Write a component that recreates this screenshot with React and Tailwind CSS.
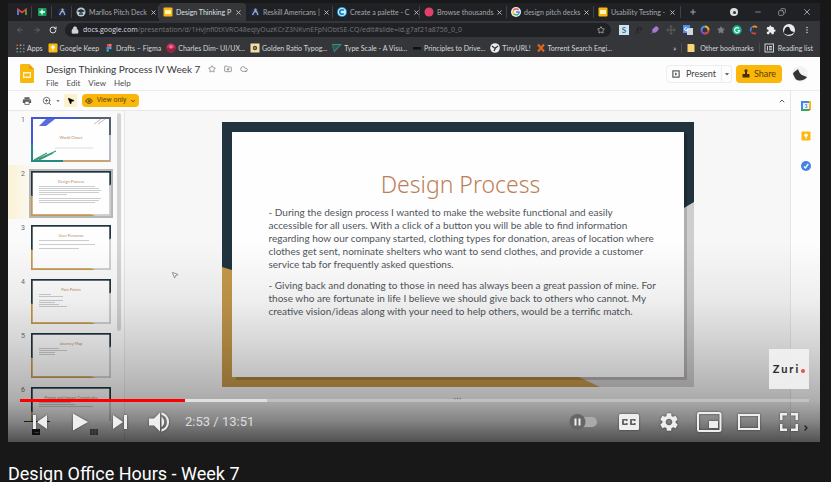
import React from "react";
import {
  ArrowLeft, ArrowRight, RotateCw, Lock, Star, Plus, Minus, X, Copy, ZoomIn,
  ChevronUp, ChevronDown, ChevronRight, Cloud, FolderPlus, Eye, MousePointer2, Feather, Move,
} from "lucide-react";
import { MdExtension, MdMoreVert, MdArrowDropDown, MdPrint, MdSettings } from "react-icons/md";

function SlidesMark({ className }) {
  return (
    <svg viewBox="0 0 14 19" className={className} aria-hidden="true">
      <path d="M1.5 0H9l5 5v12.5a1.5 1.5 0 0 1-1.5 1.5h-11A1.5 1.5 0 0 1 0 17.500V1.500A1.500 1.500 0 0 1 1.500 0Z" fill="#f9b80c" />
      <path d="M9 0l5 5H9Z" fill="#e79f06" />
      <path d="M3 8h8v6H3Z M4.200 9.500v3h5.600v-3Z" fill="#fff4cf" fillRule="evenodd" />
    </svg>
  );
}

function Fav({ kind }) {
  const art = {
    gmail: <><path d="M1 8V2.500l4 3 4-3V8" stroke="#e84235" strokeWidth="1.700" fill="none" /><path d="M1 3v5" stroke="#4285f4" strokeWidth="1.600" /><path d="M9 3v5" stroke="#34a853" strokeWidth="1.600" /></>,
    sheet: <><rect x="1" y="1" width="8.500" height="8" rx="1" fill="#129d5a" /><path d="M5 2.500v5M2.500 5h5.500" stroke="#fff" strokeWidth="1.400" /></>,
    blue: <><circle cx="5" cy="5" r="4.500" fill="#142a66" /><circle cx="5.500" cy="2.800" r="1.200" fill="#c6a95c" /><path d="M2.500 8l2-3.500h2L8 8" stroke="#b9ab83" strokeWidth="1.300" fill="none" /></>,
    cap: <><circle cx="5" cy="5" r="4.500" fill="#b9cdd2" /><path d="M1 4l4-2 4 2-4 2Z" fill="#27323b" /><path d="M3 6h4v2H3Z" fill="#4a5a63" /></>,
    slides: <><rect x="0.500" y="0.500" width="9" height="9" rx="1" fill="#f9b80c" /><rect x="2" y="3" width="6" height="4" fill="#fff0c0" /></>,
    canva: <><circle cx="5" cy="5" r="5" fill="#1b9ddb" /><circle cx="5" cy="5" r="4" fill="#c9effa" /><path d="M6.800 3.500a2.300 2.300 0 1 0 0 3" stroke="#127bb8" strokeWidth="1.600" fill="none" /></>,
    pink: <circle cx="5" cy="5" r="4.500" fill="#e23f6d" />,
    google: <><circle cx="5" cy="5" r="5" fill="#eee" /><path d="M7.500 3a3.200 3.200 0 0 0-5.200.5" stroke="#ea4335" strokeWidth="1.300" fill="none" /><path d="M2.200 3.700a3 3 0 0 0 .3 3" stroke="#fbbc05" strokeWidth="1.300" fill="none" /><path d="M2.500 6.600a3.200 3.200 0 0 0 4.700.6" stroke="#34a853" strokeWidth="1.300" fill="none" /><path d="M5 5h3.200a3 3 0 0 1-1 2.200" stroke="#4285f4" strokeWidth="1.300" fill="none" /></>,
    apps: <>{[1.5, 4.8, 8].map((y, r) => [1.5, 4.8, 8].map((x, c) => <rect key={x + "-" + y} x={x} y={y} width="1.500" height="1.500" fill={["#e55043", "#f0a92b", "#3f8be0", "#46a85b"][(r + c) % 4]} />))}</>,
    keep: <><rect x="0.500" y="0.500" width="9" height="9" rx="1" fill="#fbb80f" /><circle cx="5" cy="4.300" r="1.800" fill="#fff" /><path d="M4.200 7h1.600" stroke="#fff" /></>,
    figma: <><path d="M3 1h2v2.700H3Z" fill="#f24e1e" /><path d="M5 1h2.500v2.700H5Z" fill="#ff7262" /><path d="M2.500 3.700H5v2.700H2.500Z" fill="#a259ff" /><circle cx="6.300" cy="5" r="1.300" fill="#1abcfe" /><path d="M2.500 6.400H5v1.300a1.300 1.300 0 0 1-2.500 0Z" fill="#0acf83" /></>,
    insta: <><circle cx="5" cy="5" r="4.500" fill="#d72f6b" /><path d="M.5 5a4.500 4.500 0 0 0 9 0L5 4Z" fill="#9b2340" /><circle cx="5" cy="4" r="1.800" fill="#ef7c83" /></>,
    gold: <><rect x="0.500" y="0.500" width="9" height="9" fill="#f2dfaa" /><circle cx="5" cy="5" r="2.200" fill="#54462a" /><circle cx="5" cy="5" r="0.800" fill="#e9d69d" /></>,
    scale: <><path d="M0 1h10L2 9.500Z" fill="#3f8d80" /><path d="M1 2l7 0L2 8Z" fill="#255b54" /></>,
    dash: <rect x="1" y="4" width="8" height="2.500" fill="#101114" />,
    tiny: <><circle cx="5" cy="5" r="4.800" fill="#ececec" /><path d="M2 3l3 2.500L8 3M4 8l2-4" stroke="#353535" strokeWidth="1.300" fill="none" /></>,
    torrent: <path d="M2 1.500l6 7M8 1.500l-6 7" stroke="#dc6524" strokeWidth="2.200" />,
    folder: <path d="M1.500 1h6l1 1v7h-7Z" fill="#f7d673" />,
    reading: <><rect x="1" y="1" width="8.500" height="8" fill="none" stroke="#cfcfd1" /><path d="M3.500 3v4.500M5 3.500h3M5 5h3M5 6.700h3" stroke="#cfcfd1" /></>,
  };
  return <svg viewBox="0 0 10 10" className="size-2.5 shrink-0" aria-hidden="true">{art[kind]}</svg>;
}

const tabs = [
  ["cap", "Marllos Pitch Deck"],
  ["slides", "Design Thinking P", true],
  ["blue", "Reskill Americans |"],
  ["canva", "Create a palette - C"],
  ["pink", "Browse thousands"],
  ["google", "design pitch decks"],
  ["slides", "Usability Testing -"],
];

const bookmarks = [
  ["apps", "Apps"],
  ["keep", "Google Keep"],
  ["figma", "Drafts – Figma"],
  ["insta", "Charles Dim- UI/UX..."],
  ["gold", "Golden Ratio Typog..."],
  ["scale", "Type Scale - A Visu..."],
  ["dash", "Principles to Drive..."],
  ["tiny", "TinyURL!"],
  ["torrent", "Torrent Search Engi..."],
];

function TabStrip() {
  return (
    <div className="flex h-[18px] shrink-0 items-center bg-[#202124] pl-1 text-[7px] text-[#a6a7aa]">
      {["gmail", "sheet", "blue"].map((k) => (
        <div key={k} className="flex h-3 w-5 shrink-0 items-center justify-center border-r border-[#414246]"><Fav kind={k} /></div>
      ))}
      {tabs.map(([icon, label, active]) => (
        <div key={label} className={active ? "flex h-full w-[87px] shrink-0 items-center gap-[3px] rounded-t bg-[#35363a] px-1 text-[#dfe0e2]" : "flex h-3 w-[87px] shrink-0 items-center gap-[3px] border-r border-[#414246] px-1"}>
          <Fav kind={icon} />
          <span className="whitespace-nowrap">{label}</span>
          <button aria-label="Close tab" className="ml-auto text-[#c9cacc]"><X className="size-[7px]" strokeWidth={3} /></button>
        </div>
      ))}
      <button aria-label="New tab" className="ml-2"><Plus className="size-2" strokeWidth={3} /></button>
      <div className="ml-auto flex items-center gap-4 pr-2 text-[#b5b6b8]">
        <span className="flex size-2 items-center justify-center rounded-full bg-[#dedede]"><span className="size-[3px] rounded-full bg-[#333]" /></span>
        <button aria-label="Minimize"><Minus className="size-2" /></button>
        <button aria-label="Restore"><Copy className="size-2 -scale-x-100" /></button>
        <button aria-label="Close window"><X className="size-2.5" /></button>
      </div>
    </div>
  );
}

function Extensions() {
  return (
    <div className="flex flex-1 items-center justify-between pr-2 pl-2 text-[#c9cacc]">
      <span className="flex size-2.5 items-center justify-center bg-[#cfe3ef] font-bold text-[#2e6f97]">S</span>
      <span className="w-2 text-[#141517] italic">f?</span>
      <Feather className="size-2 fill-[#a77ad0] text-[#a77ad0]" />
      <Move className="size-2.5 text-[#66676b]" />
      <svg viewBox="0 0 10 10" className="size-2.5"><rect width="7" height="8" fill="#4b8df0" /><rect x="4" y="3" width="6" height="7" fill="#cfd6df" /><path d="M3.500 2.500A1.700 1.700 0 1 0 5 4.500H3.500" stroke="#fff" fill="none" /></svg>
      <svg viewBox="0 0 10 10" className="size-2.5"><g fill="none" strokeWidth="2"><path d="M5 1.500A3.500 3.500 0 0 1 8.500 5" stroke="#e9b53b" /><path d="M8.500 5A3.500 3.500 0 0 1 5 8.500" stroke="#e3493d" /><path d="M5 8.500A3.500 3.500 0 0 1 1.500 5" stroke="#8f4fcb" /><path d="M1.500 5A3.500 3.500 0 0 1 5 1.500" stroke="#3d94ec" /></g></svg>
      <Star className="size-2 fill-[#7c7d80] text-[#7c7d80]" />
      <svg viewBox="0 0 10 10" className="size-2.5"><circle cx="5" cy="5" r="4.700" fill="#17b585" /><path d="M7 3.500a2.500 2.500 0 1 0 .5 2H5.500" stroke="#e6fff6" strokeWidth="1.200" fill="none" /></svg>
      <svg viewBox="0 0 10 10" className="size-2.5"><g fill="none" strokeWidth="1.700"><path d="M8 2.500A3.600 3.600 0 0 0 3.500 2" stroke="#e79a2d" /><path d="M3 2.200A3.600 3.600 0 0 0 2 6.500" stroke="#4a80dc" /><path d="M2.500 7.200A3.600 3.600 0 0 0 7 8" stroke="#cf4a3e" /></g></svg>
      <MdExtension className="size-2.5 text-[#ededee]" />
      <svg viewBox="0 0 12 12" className="size-3"><circle cx="6" cy="6" r="6" fill="#eceded" /><path d="M1 9c0-4 2-7 5-6l2 4 3 1c-1 3-8 4-10 1Z" fill="#25262a" /></svg>
      <MdMoreVert className="size-2.5" />
    </div>
  );
}

function Browser() {
  return (
    <div className="shrink-0 font-[Lato,sans-serif] text-[8px] leading-[10px]">
      <TabStrip />
      <div className="flex h-[18px] items-center bg-[#35363a]">
        <div className="flex w-[57px] items-center justify-between pr-2 pl-2 text-[#737478]">
          <ArrowLeft className="size-2" /><ArrowRight className="size-2" /><RotateCw className="size-2 text-[#dcdddf]" strokeWidth={3} />
        </div>
        <div className="flex h-[14px] w-[546px] items-center gap-1 rounded-full bg-[#202124] px-1.5 text-[#77787c]">
          <Lock className="size-2 shrink-0 fill-[#d5d5d7] text-[#d5d5d7]" />
          <label className="flex flex-1 items-center font-['Open_Sans',sans-serif] text-[7px]">
            <span className="text-[#dedfe1]">docs.google.com</span>
            <input readOnly aria-label="Address" className="min-w-0 flex-1 bg-transparent outline-none" value="/presentation/d/1HvJnfl0tXVRO48eqlyOuzKCrZ3NKvnEFpNObtSE-CQ/edit#slide=id.g7af21a8756_0_0" />
          </label>
          <Star className="size-2 text-[#d5d5d7]" />
        </div>
        <Extensions />
      </div>
      <div className="flex h-[18px] items-center gap-[5px] bg-[#35363a] pl-[7px] text-[7px] text-[#d6d7d9]">
        {bookmarks.map(([icon, label]) => (
          <a key={label} href="#" className="flex shrink-0 items-center gap-0.5 whitespace-nowrap"><Fav kind={icon} />{label}</a>
        ))}
        <span className="ml-auto">»</span>
        <a href="#" className="flex shrink-0 items-center gap-1 border-l border-[#4b4c50] pl-1 whitespace-nowrap"><Fav kind="folder" />Other bookmarks</a>
        <a href="#" className="flex shrink-0 items-center gap-1 border-l border-[#4b4c50] pr-[7px] pl-1 whitespace-nowrap"><Fav kind="reading" />Reading list</a>
      </div>
    </div>
  );
}

function DocsHeader() {
  return (
    <header className="flex h-[34px] shrink-0 items-center border-b border-[#ececee] bg-[#fdfdfe] pl-3 font-[Lato,sans-serif]">
      <SlidesMark className="h-[19px] w-[14px]" />
      <div className="ml-3 flex flex-col pt-1">
        <div className="flex items-center gap-2 text-[#6c6d70]">
          <h1 className="text-[10px] leading-[14px] text-[#37383b]">Design Thinking Process IV Week 7</h1>
          <Star className="size-2" /><FolderPlus className="size-2" /><Cloud className="size-2" />
        </div>
        <nav className="flex gap-2 text-[8px] leading-[14px] text-[#4c4d50]">
          <button>File</button><button>Edit</button><button>View</button><button>Help</button>
        </nav>
      </div>
      <div className="ml-auto flex items-center pr-3 text-[9px] text-[#3e3f42]">
        <button className="flex h-[18px] w-14 items-center justify-center gap-1.5 rounded-l-sm border border-[#ededef]">
          <svg viewBox="0 0 9 9" className="size-2"><rect x="1" y="1" width="7" height="7" fill="none" stroke="#444" strokeWidth="1.200" /><path d="M3.500 2.800v3.400L6 4.500Z" fill="#444" /></svg>
          Present
        </button>
        <button aria-label="Present options" className="h-[18px] w-2.5 rounded-r-sm border-y border-r border-[#ededef]"><MdArrowDropDown className="size-2.5" /></button>
        <button className="ml-1 flex h-[18px] w-[46px] items-center justify-center gap-1 rounded-sm bg-[#fbb60a] text-[#5a4208]">
          <svg viewBox="0 0 8 9" className="h-[9px] w-2"><circle cx="4" cy="1.800" r="1.600" fill="#463205" /><path d="M3 3h2v2h2.500v3.500h-7V5H3Z" fill="#463205" /></svg>
          Share
        </button>
        <svg viewBox="0 0 16 16" className="ml-2.5 size-4"><circle cx="8" cy="8" r="8" fill="#f3f3f4" /><path d="M1 8c1-3 3-3 5-5 1 3 2 5 4 6l5 2c-2 4-10 5-12 1Z" fill="#343436" /></svg>
      </div>
    </header>
  );
}

function Toolbar() {
  return (
    <div className="flex h-5 shrink-0 items-center border-b border-[#e8e8ea] bg-[#fdfdfe] pr-1 pl-3.5 text-[#5b5c5f]">
      <button aria-label="Print"><MdPrint className="size-2.5" /></button>
      <button aria-label="Zoom" className="ml-2.5 flex items-center gap-0.5"><ZoomIn className="size-2.5" /><MdArrowDropDown className="size-2" /></button>
      <button aria-label="Select" className="ml-0.5 flex size-[13px] items-center justify-center bg-[#fdf0cd]"><MousePointer2 className="size-2 fill-black text-black" /></button>
      <button className="ml-[5px] flex h-[13px] w-[57px] items-center justify-center gap-1 rounded-sm bg-[#fbb60a] font-[Roboto,sans-serif] text-[7px] text-[#5e4508]">
        <Eye className="size-2" strokeWidth={3} />View only<ChevronDown className="size-1.5" strokeWidth={4} />
      </button>
      <button aria-label="Hide menus" className="ml-auto"><ChevronUp className="size-2" strokeWidth={3} /></button>
    </div>
  );
}

function Frame() {
  return (
    <svg viewBox="0 0 472 265" preserveAspectRatio="none" className="absolute inset-0 size-full" aria-hidden="true">
      <rect width="472" height="265" fill="#d0cdce" />
      <path d="M0 140L30 152L30 245H336L378 265H0Z" fill="#c4984a" />
      <path d="M0 0H472V80L440 99V30H30V154L0 145Z" fill="#20333e" />
      <path d="M462 12h3v246H14v-3h448Z" fill="#000" opacity="0.150" />
      <rect x="10" y="10" width="452" height="245" fill="#fefefe" />
    </svg>
  );
}

function CoverArt() {
  return (
    <svg viewBox="0 0 80 45" className="absolute inset-0 size-full" aria-hidden="true">
      <rect width="80" height="45" fill="#b8bbc2" />
      <path d="M0 0H48V2H2V30H0Z" fill="#4259d6" /><path d="M46 0h34v18h-2V2H46Z" fill="#53626e" />
      <path d="M0 28h2v15h30v2H0Z" fill="#268a82" /><path d="M32 43h47v2H32Z" fill="#cba373" />
      <rect x="2" y="2" width="76" height="41" fill="#fefefe" />
      <path d="M15 2h9L15 9H8Z" fill="#5a6be0" /><path d="M63 7l7-5M67 7l7-5" stroke="#c8b3bb" />
      <path d="M3 43l13-7M8 43l14-7M5 43l20-9" stroke="#35977a" strokeWidth="1.300" />
      <path d="M24 31h38" stroke="#d5d5d8" strokeWidth="0.800" />
    </svg>
  );
}

const thumbs = [
  { title: "World Closet", cover: true, bars: [] },
  { title: "Design Process", selected: true, bars: ["w-14", "w-[60px]", "w-[62px]", "w-[60px]", "w-7", "w-0", "w-[62px]", "w-[60px]", "w-14"] },
  { title: "User Personas", bars: ["w-[50px]", "w-0", "w-14", "w-0", "w-10"] },
  { title: "Pain Points", bars: ["w-3", "w-6", "w-0", "w-6", "w-4", "w-5", "w-7"] },
  { title: "Journey Map", bars: ["w-5", "w-7", "w-4", "w-4"] },
  { title: "Promo and Impact Complexity", bars: ["w-8", "w-9", "w-[54px]"] },
];

function Filmstrip() {
  return (
    <aside className="flex w-[117px] shrink-0 flex-col border-r border-[#e6e6e8] bg-[#fafafb]">
      <div className="flex min-h-0 flex-1 overflow-hidden">
        <ol className="flex flex-1 flex-col">
          {thumbs.map((t, i) => (
            <li key={t.title} className={t.selected ? "flex h-[54px] shrink-0 bg-linear-to-r from-[#fbf2d6] to-[#fafafb] to-30% pt-1.5" : "flex h-[54px] shrink-0 pt-1.5"}>
              <span className="w-[23px] pr-1.5 text-right font-[Roboto,sans-serif] text-[7px] leading-[7px] text-[#6a6b6e]">{i + 1}</span>
              <div className={t.selected ? "relative h-[45px] w-20 outline-2 outline-[#b5b6b8]" : "relative h-[45px] w-20"}>
                {t.cover ? <CoverArt /> : <Frame />}
                <div className={t.cover ? "relative px-2 pt-[19px]" : "relative px-2 pt-[9px]"}>
                  <p className="text-center font-[Lato,sans-serif] text-[4px] leading-[4px] whitespace-nowrap text-[#b98a63]">{t.title}</p>
                  <div className="mt-0.5 flex flex-col gap-px">
                    {t.bars.map((b, j) => <span key={j} className={"h-px bg-[#aaabae]/60 " + b} />)}
                  </div>
                </div>
              </div>
            </li>
          ))}
        </ol>
        <div className="mt-0.5 mr-[3px] h-[218px] w-1 rounded-full bg-[#d4d4d7]" />
      </div>
      <div className="ml-4 h-px w-[26px] bg-[#333]" />
      <div className="flex h-5 shrink-0 items-center gap-[50px] pl-6">
        <svg viewBox="0 0 8 6" className="h-1.5 w-2"><path d="M0 0h8v6H0Z" fill="#222" /><path d="M2.500 3.500H7" stroke="#888" /></svg>
        <svg viewBox="0 0 8 6" className="h-1.5 w-2"><path d="M0 0h8v6H0Z" fill="#666" /><path d="M0 2h8M0 4h8M2.700 0v6M5.300 0v6" stroke="#bbb" strokeWidth="0.500" /></svg>
      </div>
    </aside>
  );
}

function Slide() {
  return (
    <article className="relative h-[265px] w-[472px] shrink-0">
      <Frame />
      <div className="relative px-[47px] pt-[49px] font-[Lato,sans-serif]">
        <h2 className="-mr-1.5 text-center font-['Noto_Sans',sans-serif] text-[23px] leading-[26px] font-light text-[#bd7f58]">Design Process</h2>
        <p className="mt-[9px] text-[10px] leading-[13px] whitespace-nowrap text-[#50555b]">
          - During the design process I wanted to make the website functional and easily<br />
          accessible for all users. With a click of a button you will be able to find information<br />
          regarding how our company started, clothing types for donation, areas of location where<br />
          clothes get sent, nominate shelters who want to send clothes, and provide a customer<br />
          service tab for frequently asked questions.
        </p>
        <p className="mt-2 text-[10px] leading-[13px] whitespace-nowrap text-[#50555b]">
          - Giving back and donating to those in need has always been a great passion of mine. For<br />
          those who are fortunate in life I believe we should give back to others who cannot. My<br />
          creative vision/ideas along with your need to help others, would be a terrific match.
        </p>
      </div>
    </article>
  );
}

function SidePanel() {
  return (
    <aside className="flex w-[30px] shrink-0 flex-col items-center gap-5 border-l border-[#e6e6e8] bg-[#fdfdfe] pt-2.5">
      <svg viewBox="0 0 10 10" className="size-2.5"><path d="M0 0h8v2H2v6H0Z" fill="#4285f4" /><path d="M8 0h2v8H8Z" fill="#fbbc04" /><path d="M0 8h8v2H0Z" fill="#34a853" /><path d="M8 8h2L8 10Z" fill="#ea4335" /><rect x="2" y="2" width="6" height="6" fill="#e7f2fd" /><path d="M4 3.500h2L5 5h1v1.500H4" stroke="#4285f4" strokeWidth="0.700" fill="none" /></svg>
      <Fav kind="keep" />
      <svg viewBox="0 0 10 10" className="size-2.5"><circle cx="5" cy="5" r="5" fill="#4682e6" /><path d="M3 5.500l1.400 1.400L7.300 3" stroke="#fff" strokeWidth="1.300" fill="none" /></svg>
      <ChevronRight className="mt-auto mb-2.5 size-2 text-[#444]" strokeWidth={4} />
    </aside>
  );
}

function Ctl({ label, children }) {
  return (
    <button aria-label={label} className="flex h-10 w-10 items-center justify-center drop-shadow-[0_0_1px_rgba(0,0,0,0.5)]">
      <svg viewBox="0 0 40 40" className="size-10" fill="#eee">{children}</svg>
    </button>
  );
}

function Controls() {
  return (
    <div className="absolute inset-x-0 bottom-0 flex h-[200px] flex-col justify-end bg-[linear-gradient(180deg,rgba(0,0,0,0)_0%,rgba(0,0,0,0.06)_29%,rgba(0,0,0,0.15)_49%,rgba(0,0,0,0.25)_69%,rgba(0,0,0,0.31)_79%,rgba(0,0,0,0.46)_89%,rgba(0,0,0,0.68)_100%)] pr-[11px] pl-3 font-[Roboto,sans-serif]">
      <div className="mb-2.5 flex size-10 items-center justify-center self-end bg-[#f0f0f0]/95">
        <span className="font-[Lato,sans-serif] text-[11px] font-bold tracking-[2px] text-[#2a2a2a]">Zuri</span>
        <span className="mt-1 ml-px size-1 rounded-full bg-[#ec4f4c]" />
      </div>
      <div className="relative h-[3px] bg-white/25">
        <div className="absolute inset-y-0 left-0 w-[31.300%] bg-white/50" />
        <div className="absolute inset-y-0 left-0 w-[20.900%] bg-[#f00]" />
        <input type="range" aria-label="Seek" min="0" max="831" defaultValue="173" className="absolute inset-0 h-full w-full opacity-0" />
      </div>
      <div className="flex h-10 items-center">
        <Ctl label="Previous"><path d="M13 13h3v14h-3ZM27 13v14l-10-7Z" /></Ctl>
        <Ctl label="Play"><path d="M13 11.500l15 8.500-15 8.500Z" /></Ctl>
        <Ctl label="Next"><path d="M24 13h3v14h-3ZM13 13v14l10-7Z" /></Ctl>
        <Ctl label="Mute"><path d="M9 16.500v7h5l6 6v-19l-6 6Z" /><path d="M21.500 15a6 6 0 0 1 0 10Z" /><path d="M21.500 10.300v2.500a7.500 7.500 0 0 1 0 14.400v2.500a10 10 0 0 0 0-19.400Z" /></Ctl>
        <span className="ml-[5px] text-[13px] text-[#ddd]">2:53 / 13:51</span>
        <button role="switch" aria-checked="false" aria-label="Autoplay" className="ml-auto flex h-10 w-[50px] items-center justify-center">
          <svg viewBox="0 0 30 16" className="h-4 w-[30px]"><rect x="9" y="3" width="19" height="10" rx="5" fill="#aaa" /><circle cx="8.500" cy="8" r="8" fill="#666" /><path d="M5.500 4.500h2v7h-2ZM9.500 4.500h2v7h-2Z" fill="#eee" /></svg>
        </button>
        <Ctl label="Subtitles"><path fillRule="evenodd" d="M11.500 12h17a1.500 1.500 0 0 1 1.500 1.500v13a1.500 1.500 0 0 1-1.500 1.500h-17a1.500 1.500 0 0 1-1.500-1.500v-13a1.500 1.500 0 0 1 1.500-1.500ZM14 17h4.500v2H17v-.5h-2v3h2V21h1.500v2H14a1 1 0 0 1-1-1v-4a1 1 0 0 1 1-1ZM22 17h4.500v2H25v-.5h-2v3h2V21h1.500v2H22a1 1 0 0 1-1-1v-4a1 1 0 0 1 1-1Z" /></Ctl>
        <button aria-label="Settings" className="flex size-10 items-center justify-center text-[#eee] drop-shadow-[0_0_1px_rgba(0,0,0,0.5)]"><MdSettings className="size-[22px]" /></button>
        <Ctl label="Miniplayer"><rect x="9" y="11" width="22.500" height="18" rx="1.500" fill="none" stroke="#eee" strokeWidth="2" /><path d="M20 19h9v7h-9Z" /></Ctl>
        <Ctl label="Theater mode"><path fillRule="evenodd" d="M9 12h22v16H9ZM11 14v12h18V14Z" /></Ctl>
        <Ctl label="Full screen"><path d="M11 11h7v2.500h-4.500V18H11ZM22 11h7v7h-2.500v-4.500H22ZM11 22h2.500v4.500H18V29h-7ZM26.500 22H29v7h-7v-2.500h4.500Z" /></Ctl>
      </div>
    </div>
  );
}

export default function App() {
  return (
    <main className="min-h-screen bg-[#181818] pt-[3px] pr-[11px] pl-2">
      <section className="relative flex aspect-[812/439] w-full flex-col overflow-hidden bg-[#f7f7f8]">
        <Browser />
        <DocsHeader />
        <div className="flex min-h-0 flex-1">
          <div className="flex min-w-0 flex-1 flex-col">
            <Toolbar />
            <div className="flex min-h-0 flex-1">
              <Filmstrip />
              <div className="flex min-w-0 flex-1 flex-col items-center pt-[11px]">
                <Slide />
                <span className="mt-1.5 text-[10px] leading-[10px] text-[#999]">···</span>
              </div>
            </div>
          </div>
          <SidePanel />
        </div>
        <MousePointer2 className="absolute top-[268px] left-[163px] size-2 fill-white text-[#666]" />
        <Controls />
      </section>
      <h1 className="mt-6 font-[Roboto,sans-serif] text-[18px] leading-4 text-white">Design Office Hours - Week 7</h1>
    </main>
  );
}
